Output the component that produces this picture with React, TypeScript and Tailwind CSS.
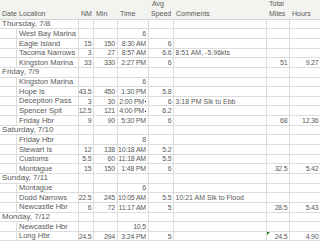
import React from 'react';

type Row =
  | { date: string }
  | {
      loc: string;
      nm?: string;
      min?: string;
      time?: string;
      speed?: string;
      comment?: string;
      total?: string;
      hours?: string;
      dot?: boolean;
      flag?: boolean;
    };

const rows: Row[] = [
  { date: 'Thursday, 7/8' },
  { loc: 'West Bay Marina', time: '6' },
  { loc: 'Eagle Island', nm: '15', min: '150', time: '8:30 AM', speed: '6' },
  { loc: 'Tacoma Narrows', nm: '3', min: '27', time: '8:57 AM', speed: '6.6', comment: '8:51 AM, -5.96kts' },
  { loc: 'Kingston Marina', nm: '33', min: '330', time: '2:27 PM', speed: '6', total: '51', hours: '9.27' },
  { date: 'Friday, 7/9' },
  { loc: 'Kingston Marina', time: '6' },
  { loc: 'Hope Is', nm: '43.5', min: '450', time: '1:30 PM', speed: '5.8' },
  { loc: 'Deception Pass', nm: '3', min: '30', time: '2:00 PM', speed: '6', comment: '3:18 PM Slk to Ebb', dot: true },
  { loc: 'Spencer Spit', nm: '12.5', min: '121', time: '4:00 PM', speed: '6.2', dot: true },
  { loc: 'Friday Hbr', nm: '9', min: '90', time: '5:30 PM', speed: '6', total: '68', hours: '12.36' },
  { date: 'Saturday, 7/10' },
  { loc: 'Friday Hbr', time: '8' },
  { loc: 'Stewart Is', nm: '12', min: '138', time: '10:18 AM', speed: '5.2' },
  { loc: 'Customs', nm: '5.5', min: '60', time: '11:18 AM', speed: '5.5' },
  { loc: 'Montague', nm: '15', min: '150', time: '1:48 PM', speed: '6', total: '32.5', hours: '5.42' },
  { date: 'Sunday, 7/11' },
  { loc: 'Montague', time: '6' },
  { loc: 'Dodd Narrows', nm: '22.5', min: '245', time: '10:05 AM', speed: '5.5', comment: '10:21 AM Slk to Flood' },
  { loc: 'Newcastle Hbr', nm: '6', min: '72', time: '11:17 AM', speed: '5', total: '28.5', hours: '5.43' },
  { date: 'Monday, 7/12' },
  { loc: 'Newcastle Hbr', time: '10.5' },
  { loc: 'Long Hbr', nm: '24.5', min: '294', time: '3:24 PM', speed: '5', total: '24.5', hours: '4.90', flag: true },
];

const cell = 'flex items-center whitespace-nowrap border-b border-r border-[#dcdcdc] leading-none';
const num = `${cell} justify-end pr-[1.5px] text-[7px] tracking-[-0.2px]`;
const head = 'flex flex-col justify-end pl-[2px] text-[7px] leading-[10px] whitespace-nowrap border-b border-[#d4d4d4] bg-[#f3f3f0]';

export default function App() {
  return (
    <div
      className="w-[320px] h-[244px] overflow-hidden bg-white text-[7.5px] text-[#5a5a5a]"
      style={{ fontFamily: '"Liberation Sans", Arial, sans-serif' }}
    >
      <div className="grid grid-cols-[17px_62px_15px_24px_31px_25px_93px_23px_31px] grid-rows-[19.7px] auto-rows-[9.65px]">
        <div className={head}>Date</div>
        <div className={head}>Location</div>
        <div className={head}>NM</div>
        <div className={head}>Min</div>
        <div className={head}>Time</div>
        <div className={head}>
          <span className="pl-[1px]">Avg</span>
          <span>Speed</span>
        </div>
        <div className={head}>Comments</div>
        <div className={head}>
          <span>Total</span>
          <span>Miles</span>
        </div>
        <div className={head}>Hours</div>

        {rows.map((r, i) =>
          'date' in r ? (
            <React.Fragment key={i}>
              <div className={`${cell} col-span-2 pl-[2px] text-[8px]`}>{r.date}</div>
              <div className={cell} />
              <div className={cell} />
              <div className={cell} />
              <div className={cell} />
              <div className={cell} />
              <div className={cell} />
              <div className={cell} />
            </React.Fragment>
          ) : (
            <React.Fragment key={i}>
              <div className={cell} />
              <div className={`${cell} pl-[2px]`}>{r.loc}</div>
              <div className={num}>{r.nm}</div>
              <div className={`${num} pr-[2px]`}>{r.min}</div>
              <div className={`${num} pr-[2px]`}>
                {r.time}
                {r.dot && <span className="ml-[1px] w-px h-px bg-black self-end mb-[3px]" />}
              </div>
              <div className={num}>{r.speed}</div>
              <div className={`${cell} pl-[1.5px] text-[7px]`}>{r.comment}</div>
              <div className={`${num} relative`}>
                {r.flag && (
                  <span className="absolute left-0 top-0 w-0 h-0 border-t-[3px] border-r-[3px] border-t-[#1e7a1e] border-r-transparent" />
                )}
                {r.total}
              </div>
              <div className={num}>{r.hours}</div>
            </React.Fragment>
          )
        )}
      </div>
    </div>
  );
}
